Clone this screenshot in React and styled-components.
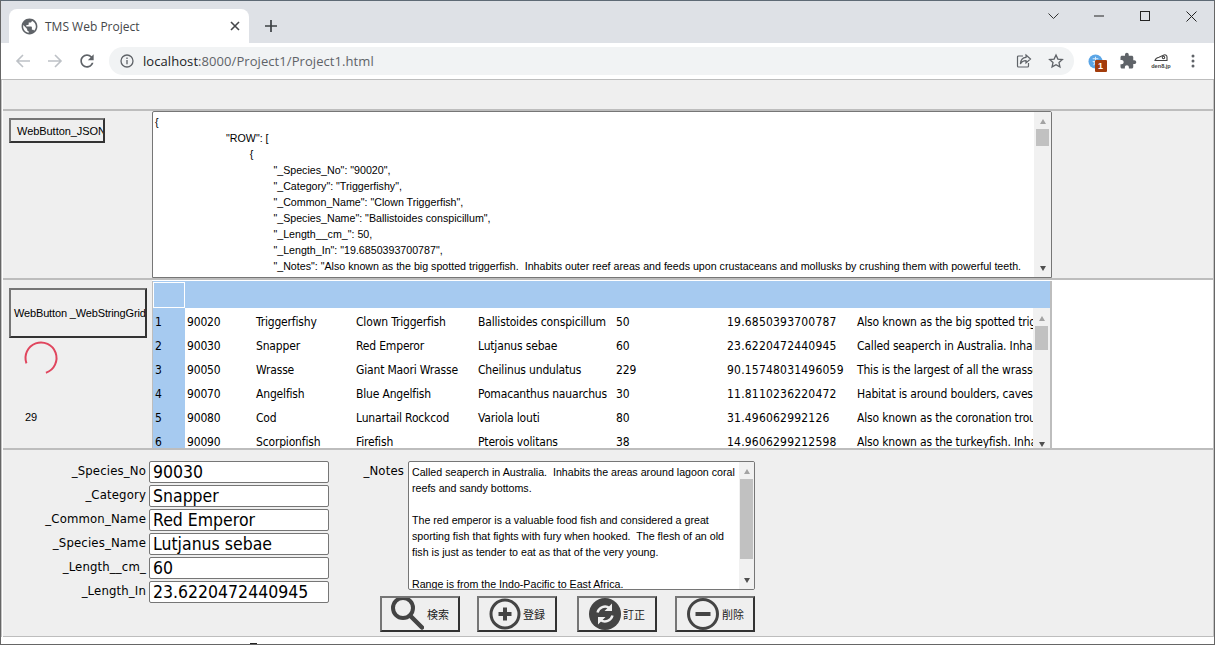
import React from "react";
import styled, { createGlobalStyle } from "styled-components";

const Global = createGlobalStyle`
  html, body { margin: 0; padding: 0; background: #fff; overflow: hidden; }
  * { box-sizing: border-box; }
`;

const tahoma = `"DejaVu Sans Condensed", "DejaVu Sans", Tahoma, sans-serif`;

const Frame = styled.div`
  width: 1215px; height: 645px; display: flex; flex-direction: column; overflow: hidden;
  border-top: 1px solid #5e6a75; border-left: 1px solid #666; border-right: 1px solid #666; border-bottom: 1px solid #666;
  font-family: "Liberation Sans", Arial, sans-serif; color: #000; background: #fff;
`;
const TabStrip = styled.div`
  height: 42px; background: #dee1e6; display: flex; align-items: flex-end; padding-left: 8px; flex: none;
`;
const Tab = styled.div`
  width: 240px; height: 34px; background: #fff; border-radius: 8px 8px 0 0; display: flex; align-items: center;
  padding: 0 9px 0 11px; gap: 6px; position: relative;
`;
const TabTitle = styled.span`
  flex: 1; font: 12px "Open Sans", sans-serif; color: #45474a;
`;
const NewTab = styled.div`
  width: 28px; height: 28px; margin: 0 0 3px 8px; display: flex; align-items: center; justify-content: center;
`;
const WinControls = styled.div`
  margin-left: auto; align-self: flex-start; display: grid; grid-template-columns: repeat(4, 46px); height: 30px;
  & > div { display: flex; align-items: center; justify-content: center; }
`;
const Toolbar = styled.div`
  height: 37px; flex: none; display: flex; align-items: center; background: #fff; padding-left: 6px;
  border-bottom: 1px solid #bdbdbd;
`;
const NavButton = styled.div`
  width: 32px; height: 24px; display: flex; align-items: center; justify-content: center; flex: none;
`;
const Omnibox = styled.div`
  width: 965px; height: 28px; margin-left: 6px; background: #f1f3f4; border-radius: 14px; display: flex; align-items: center;
  padding: 0 2px 0 11px; flex: none;
`;
const Url = styled.span`
  flex: 1; margin-left: 9px; font: 13px "Open Sans", sans-serif; color: #5f6368; letter-spacing: 0.07px;
  & b { font-weight: 400; color: #202124; }
`;
const OmniIcon = styled.div`
  width: 32px; display: flex; justify-content: center; align-items: center;
`;
const ExtIcons = styled.div`
  display: grid; grid-template-columns: 33px 32px 33px 31px; margin-left: 5px; justify-items: center; align-items: center;
`;
const ExtBadge = styled.span`
  position: absolute; left: 9px; top: 9px; width: 12px; height: 12px; background: #a33c0c; color: #fff; border-radius: 1px;
  font: bold 9px/12px "Liberation Sans", sans-serif; text-align: center;
`;
const Ext = styled.div`
  position: relative; width: 20px; height: 20px; display: flex; justify-content: center; align-items: center;
`;
const Page = styled.div`
  flex: 1; min-height: 0; display: flex; flex-direction: column; padding-left: 1px; border-left: 1px solid #c4c4c4; border-right: 1px solid #c4c4c4;
`;
const TopBand = styled.div`
  height: 31px; flex: none; background: #efefef; border-bottom: 2px solid #bdbdbd;
`;
const JsonRow = styled.div`
  height: 169px; flex: none; display: flex; background: #efefef; border-bottom: 2px solid #bdbdbd;
`;
const GridRow = styled.div`
  height: 170px; flex: none; display: flex; background: #fff; border-bottom: 2px solid #bdbdbd;
`;
const SideCell = styled.div`
  width: 149px; flex: none; background: #efefef; padding: ${p => p.$top}px 0 0 6px; display: flex; flex-direction: column; align-items: flex-start;
`;
const PageButton = styled.button`
  width: ${p => p.$w}px; height: ${p => p.$h}px; background: #efefef; border: 2px solid; border-color: #767676 #333 #333 #767676;
  padding: 0 0 0 ${p => p.$pad}px; font: 11px "Liberation Sans", sans-serif; letter-spacing: ${p => p.$ls || 0}px; color: #000; text-align: left; white-space: nowrap; overflow: hidden; flex: none;
`;
const Spinner = styled.svg`
  margin: 2px 0 0 14px; display: block; flex: none;
`;
const Count = styled.div`
  margin: 35px 0 0 16px; font: 11px "Liberation Sans", sans-serif;
`;
const JsonBox = styled.div`
  width: 900px; flex: none; background: #fff; border: 1px solid #767676; display: flex; overflow: hidden; border-radius: 2px 2px 0 0;
`;
const JsonText = styled.div`
  flex: 1; min-width: 0; padding: 2px 0 0 2px; font: 10.67px/16px "Liberation Sans", sans-serif; white-space: pre; overflow: hidden; color: #000;
`;
const Scrollbar = styled.div`
  width: ${p => p.$w}px; flex: none; background: #f1f1f1; display: flex; flex-direction: column; align-items: center;
`;
const Arrow = styled.div`
  width: 0; height: 0; border-left: 3.5px solid transparent; border-right: 3.5px solid transparent; flex: none;
  ${p => p.$up ? "border-bottom: 5px solid #a3a3a3;" : "border-top: 5px solid #505050;"}
  margin-top: ${p => p.$mt || 0}px;
`;
const Thumb = styled.div`
  width: 13px; height: ${p => p.$h}px; background: #c1c1c1; flex: none; margin-top: ${p => p.$mt}px;
`;
const StringGrid = styled.div`
  width: 900px; height: 167px; margin-top: 1px; flex: none; background: #fff; border-right: 2px solid #bdbdbd; border-left: 1px solid #bdbdbd; overflow: hidden;
  display: flex; flex-direction: column; font: 12px ${tahoma};
`;
const GridHead = styled.div`
  height: 27px; background: #a6caf0; flex: none; display: flex; align-items: flex-end;
`;
const HeadCorner = styled.div`
  width: 32px; height: 26px; background: #a6caf0; border: 1px solid #fff; flex: none;
`;
const GridBody = styled.div`
  flex: 1; min-height: 0; display: flex; overflow: hidden;
`;
const Rows = styled.div`
  flex: 1; min-width: 0; overflow: hidden; background: linear-gradient(to right, #a6caf0 32px, #fff 32px); padding-top: 2px;
`;
const RowLine = styled.div`
  display: grid; grid-template-columns: 32px 69px 100px 122px 138px 111px 130px 178px; height: 24px; align-items: center;
`;
const Cell = styled.div`
  white-space: nowrap; overflow: hidden; padding-left: 2px; color: #000; line-height: 24px;
  letter-spacing: ${p => p.$num ? 0.2 : -0.17}px;
`;
const Form = styled.div`
  height: 187px; flex: none; background: #efefef; border-bottom: 1px solid #bdbdbd; display: flex; padding-top: 11px;
`;
const FieldCol = styled.div`
  width: 326px; flex: none; display: flex; flex-direction: column; gap: 2px;
`;
const FieldRow = styled.div`
  display: grid; grid-template-columns: 143px 180px; column-gap: 3px; height: 22px; align-items: center;
`;
const FieldLabel = styled.div`
  text-align: right; font: 13px ${tahoma}; letter-spacing: 0.15px; margin-top: -3px;
`;
const FieldValue = styled.div`
  height: 22px; border: 1px solid #767676; border-radius: 2px; background: #fff; padding-left: 3px; font: 17.5px/20px ${tahoma}; color: #000; overflow: hidden; white-space: nowrap;
`;
const NotesCol = styled.div`
  margin-left: 27px; width: 400px; flex: none; display: flex; flex-direction: column;
`;
const NotesRow = styled.div`
  display: flex; gap: 4px; align-items: flex-start;
`;
const NotesLabel = styled.div`
  width: 48px; text-align: right; font: 13px ${tahoma}; letter-spacing: 0.15px; margin-top: 2px;
`;
const NotesBox = styled.div`
  width: 347px; height: 129px; border: 1px solid #767676; border-radius: 2px; background: #fff; display: flex; overflow: hidden;
`;
const NotesText = styled.div`
  flex: 1; min-width: 0; padding: 2px 0 0 3px; font: 10.67px/16px "Liberation Sans", sans-serif; white-space: pre; overflow: hidden;
`;
const ButtonRow = styled.div`
  display: grid; grid-template-columns: 97px 100px 98px 80px; margin: 6px 0 0 24px; justify-items: start;
`;
const ActionButton = styled.button`
  width: 80px; height: 36px; background: #efefef; border: 2px solid; border-color: #767676 #333 #333 #767676; display: flex; align-items: center;
  font: 11px "Noto Sans CJK JP", sans-serif; color: #222; white-space: nowrap;
  padding: 0 0 0 ${p => p.$pad}px; gap: ${p => p.$gap}px; overflow: hidden;
`;
const ButtonIcon = styled.svg`
  flex: none; display: block;
`;
const Foot = styled.div`
  flex: 1; background: #fff; display: flex; align-items: flex-end; margin: 0 -1px 0 -2px; padding-left: 249px;
`;
const FootMark = styled.div`
  width: 7px; height: 1px; background: #222;
`;

const G = ({ d, s = 16, c = "#5f6368" }) => (
  <svg width={s} height={s} viewBox="0 0 24 24" fill={c}><path d={d} /></svg>
);
const globe = "M12 2C6.48 2 2 6.48 2 12s4.48 10 10 10 10-4.48 10-10S17.52 2 12 2zm-1 17.93c-3.95-.49-7-3.85-7-7.93 0-.62.08-1.21.21-1.79L9 15v1c0 1.1.9 2 2 2v1.93zm6.9-2.54c-.26-.81-1-1.39-1.9-1.39h-1v-3c0-.55-.45-1-1-1H8v-2h2c.55 0 1-.45 1-1V7h2c1.1 0 2-.9 2-2v-.41c2.93 1.19 5 4.06 5 7.41 0 2.08-.8 3.97-2.1 5.39z";
const puzzle = "M20.5 11H19V7c0-1.1-.9-2-2-2h-4V3.5C13 2.12 11.88 1 10.5 1S8 2.12 8 3.5V5H4c-1.1 0-1.99.9-1.99 2v3.8H3.5c1.49 0 2.7 1.21 2.7 2.7s-1.21 2.7-2.7 2.7H2V20c0 1.1.9 2 2 2h3.8v-1.5c0-1.49 1.21-2.7 2.7-2.7 1.49 0 2.7 1.21 2.7 2.7V22H17c1.1 0 2-.9 2-2v-4h1.5c1.38 0 2.5-1.12 2.5-2.5S21.88 11 20.5 11z";
const refresh = "M17.65 6.35C16.2 4.9 14.21 4 12 4c-4.42 0-7.99 3.58-7.99 8s3.57 8 7.99 8c3.73 0 6.84-2.55 7.73-6h-2.08c-.82 2.33-3.04 4-5.65 4-3.31 0-6-2.69-6-6s2.69-6 6-6c1.66 0 3.14.69 4.22 1.78L13 11h7V4l-2.35 2.35z";

const json = `{
\t\t\t"ROW": [
\t\t\t\t{
\t\t\t\t\t"_Species_No": "90020",
\t\t\t\t\t"_Category": "Triggerfishy",
\t\t\t\t\t"_Common_Name": "Clown Triggerfish",
\t\t\t\t\t"_Species_Name": "Ballistoides conspicillum",
\t\t\t\t\t"_Length__cm_": 50,
\t\t\t\t\t"_Length_In": "19.6850393700787",
\t\t\t\t\t"_Notes": "Also known as the big spotted triggerfish.  Inhabits outer reef areas and feeds upon crustaceans and mollusks by crushing them with powerful teeth.`;

const notes = `Called seaperch in Australia.  Inhabits the areas around lagoon coral
reefs and sandy bottoms.

The red emperor is a valuable food fish and considered a great
sporting fish that fights with fury when hooked.  The flesh of an old
fish is just as tender to eat as that of the very young.

Range is from the Indo-Pacific to East Africa.`;

const rows = [
  ["1", "90020", "Triggerfishy", "Clown Triggerfish", "Ballistoides conspicillum", "50", "19.6850393700787", "Also known as the big spotted triggerfish. Inhabits outer reef areas"],
  ["2", "90030", "Snapper", "Red Emperor", "Lutjanus sebae", "60", "23.6220472440945", "Called seaperch in Australia. Inhabits the areas around lagoon coral"],
  ["3", "90050", "Wrasse", "Giant Maori Wrasse", "Cheilinus undulatus", "229", "90.15748031496059", "This is the largest of all the wrasses found in the Pacific"],
  ["4", "90070", "Angelfish", "Blue Angelfish", "Pomacanthus nauarchus", "30", "11.8110236220472", "Habitat is around boulders, caves, coral ledges and crevices"],
  ["5", "90080", "Cod", "Lunartail Rockcod", "Variola louti", "80", "31.496062992126", "Also known as the coronation trout. It is found around coral reefs"],
  ["6", "90090", "Scorpionfish", "Firefish", "Pterois volitans", "38", "14.9606299212598", "Also known as the turkeyfish. Inhabits reef caves and crevices"],
];

const fields = [
  ["_Species_No", "90030"],
  ["_Category", "Snapper"],
  ["_Common_Name", "Red Emperor"],
  ["_Species_Name", "Lutjanus sebae"],
  ["_Length__cm_", "60"],
  ["_Length_In", "23.6220472440945"],
];

export default function App() {
  return (
    <Frame>
      <Global />
      <TabStrip>
        <Tab>
          <G d={globe} s={19} c="#5f6368" />
          <TabTitle>TMS Web Project</TabTitle>
          <svg width="10" height="10" viewBox="0 0 10 10" stroke="#45474a" strokeWidth="1.6"><path d="M1 1l8 8M9 1l-8 8" /></svg>
        </Tab>
        <NewTab>
          <svg width="12" height="12" viewBox="0 0 12 12" stroke="#3c4043" strokeWidth="1.7"><path d="M6 0v12M0 6h12" /></svg>
        </NewTab>
        <WinControls>
          <div><svg width="11" height="7" viewBox="0 0 11 7" fill="none" stroke="#333" strokeWidth="1"><path d="M.5.5l5 5 5-5" /></svg></div>
          <div><svg width="10" height="2" viewBox="0 0 10 2" stroke="#222" strokeWidth="1"><path d="M0 1h10" /></svg></div>
          <div><svg width="10" height="10" viewBox="0 0 10 10" fill="none" stroke="#222" strokeWidth="1"><rect x=".5" y=".5" width="9" height="9" /></svg></div>
          <div><svg width="11" height="11" viewBox="0 0 11 11" stroke="#222" strokeWidth="1"><path d="M.5.5l10 10M10.5.5l-10 10" /></svg></div>
        </WinControls>
      </TabStrip>
      <Toolbar>
        <NavButton>
          <svg width="16" height="16" viewBox="0 0 16 16" fill="none" stroke="#bdc1c6" strokeWidth="1.6"><path d="M15 8H2M8 2L2 8l6 6" /></svg>
        </NavButton>
        <NavButton>
          <svg width="16" height="16" viewBox="0 0 16 16" fill="none" stroke="#bdc1c6" strokeWidth="1.6"><path d="M1 8h13M8 2l6 6-6 6" /></svg>
        </NavButton>
        <NavButton><G d={refresh} s={20} c="#5f6368" /></NavButton>
        <Omnibox>
          <svg width="14" height="14" viewBox="0 0 14 14" fill="none" stroke="#5f6368" strokeWidth="1.3"><circle cx="7" cy="7" r="6" /><path d="M7 6v4.2M7 3.6v1.4" /></svg>
          <Url><b>localhost</b>:8000/Project1/Project1.html</Url>
          <OmniIcon>
            <svg width="16" height="16" viewBox="0 0 16 16" fill="none" stroke="#5f6368" strokeWidth="1.2"><path d="M10 2l4.5 4L10 10V7.6C7 7.6 5.4 9 4.4 11 4.6 7.6 6.4 4.6 10 4.4z" /><path d="M7 3H2.5A1 1 0 0 0 1.5 4v9a1 1 0 0 0 1 1h9a1 1 0 0 0 1-1v-3" /></svg>
          </OmniIcon>
          <OmniIcon>
            <svg width="16" height="16" viewBox="0 0 24 24" fill="none" stroke="#5f6368" strokeWidth="2"><path d="M12 3l2.8 6.1 6.7.7-5 4.5 1.4 6.6-5.9-3.4-5.9 3.4 1.4-6.6-5-4.5 6.7-.7z" /></svg>
          </OmniIcon>
        </Omnibox>
        <ExtIcons>
          <Ext>
            <svg width="15" height="15" viewBox="0 0 16 16"><circle cx="8" cy="8" r="7.5" fill="#5aa5e6" /><path d="M5 5h6M8 3v8M5 8h6M6 12c1-1 1-3 0-4M11 12c-1-1-1-3 0-4" stroke="#dcecfa" strokeWidth="1.1" fill="none" /></svg>
            <ExtBadge>1</ExtBadge>
          </Ext>
          <Ext><G d={puzzle} s={18} c="#5f6368" /></Ext>
          <Ext>
            <svg width="20" height="20" viewBox="0 0 20 20" fill="none" stroke="#444" strokeWidth="1.1"><path d="M4 9.5c.5-2 2-3 4-3.3l5-2.2c1.5-.6 3 .5 3 2v3.5H4z" /><circle cx="12.5" cy="6.5" r="1.2" /><text x="10" y="17" fontSize="5.6" textAnchor="middle" fill="#444" stroke="none" fontFamily="Liberation Sans" fontWeight="700">den8.jp</text></svg>
          </Ext>
          <Ext>
            <svg width="4" height="14" viewBox="0 0 4 14" fill="#5f6368"><circle cx="2" cy="2" r="1.5" /><circle cx="2" cy="7" r="1.5" /><circle cx="2" cy="12" r="1.5" /></svg>
          </Ext>
        </ExtIcons>
      </Toolbar>
      <Page>
        <TopBand />
        <JsonRow>
          <SideCell $top={7}>
            <PageButton $w={96} $h={25} $pad={6} $ls={-0.05}>WebButton_JSON</PageButton>
          </SideCell>
          <JsonBox>
            <JsonText>{json}</JsonText>
            <Scrollbar $w={17}>
              <Arrow $up $mt={7} />
              <Thumb $h={17} $mt={5} />
              <Arrow $mt={120} />
            </Scrollbar>
          </JsonBox>
        </JsonRow>
        <GridRow>
          <SideCell $top={8}>
            <PageButton $w={138} $h={50} $pad={3} $ls={-0.15}>WebButton _WebStringGrid</PageButton>
            <Spinner width="36" height="36" viewBox="0 0 36 36" fill="none">
              <circle cx="18" cy="18" r="15.5" stroke="#e0465e" strokeWidth="2" strokeDasharray="73 97.4" transform="rotate(-200 18 18)" />
            </Spinner>
            <Count>29</Count>
          </SideCell>
          <StringGrid>
            <GridHead><HeadCorner /></GridHead>
            <GridBody>
              <Rows>
                {rows.map(r => (
                  <RowLine key={r[0]}>
                    {r.map((c, i) => <Cell key={i} $num={i === 6}>{c}</Cell>)}
                  </RowLine>
                ))}
              </Rows>
              <Scrollbar $w={17}>
                <Arrow $up $mt={8} />
                <Thumb $h={24} $mt={5} />
                <Arrow $mt={92} />
              </Scrollbar>
            </GridBody>
          </StringGrid>
        </GridRow>
        <Form>
          <FieldCol>
            {fields.map(([l, v]) => (
              <FieldRow key={l}>
                <FieldLabel>{l}</FieldLabel>
                <FieldValue>{v}</FieldValue>
              </FieldRow>
            ))}
          </FieldCol>
          <NotesCol>
            <NotesRow>
              <NotesLabel>_Notes</NotesLabel>
              <NotesBox>
                <NotesText>{notes}</NotesText>
                <Scrollbar $w={15}>
                  <Arrow $up $mt={7} />
                  <Thumb $h={80} $mt={5} />
                  <Arrow $mt={19} />
                </Scrollbar>
              </NotesBox>
            </NotesRow>
            <ButtonRow>
              <ActionButton $pad={6} $gap={3}>
                <ButtonIcon width="36" height="36" viewBox="0 0 36 36" fill="none" stroke="#444"><circle cx="15" cy="12" r="10" strokeWidth="4" /><path d="M22 19.5l12 12" strokeWidth="4.5" strokeLinecap="round" /></ButtonIcon>
                検索
              </ActionButton>
              <ActionButton $pad={10} $gap={2}>
                <ButtonIcon width="32" height="32" viewBox="0 0 32 32" fill="none" stroke="#444"><circle cx="16" cy="16" r="14" strokeWidth="3" /><path d="M16 9.5v13M9.5 16h13" strokeWidth="4" /></ButtonIcon>
                登録
              </ActionButton>
              <ActionButton $pad={9} $gap={1}>
                <ButtonIcon width="34" height="34" viewBox="0 0 34 34"><circle cx="17" cy="17" r="16" fill="#444" /><path d="M9.5 15.5a7.8 7.8 0 0 1 12-4.5M24.5 18.5a7.8 7.8 0 0 1-12 4.5" fill="none" stroke="#efefef" strokeWidth="2.4" /><path d="M24 6.5v7.5h-7.5zM10 27.5V20h7.5z" fill="#efefef" /></ButtonIcon>
                訂正
              </ActionButton>
              <ActionButton $pad={10} $gap={3}>
                <ButtonIcon width="32" height="32" viewBox="0 0 32 32" fill="none" stroke="#444"><circle cx="16" cy="16" r="14.5" strokeWidth="3" /><path d="M8.5 16h15" strokeWidth="4" /></ButtonIcon>
                削除
              </ActionButton>
            </ButtonRow>
          </NotesCol>
        </Form>
        <Foot><FootMark /></Foot>
      </Page>
    </Frame>
  );
}
